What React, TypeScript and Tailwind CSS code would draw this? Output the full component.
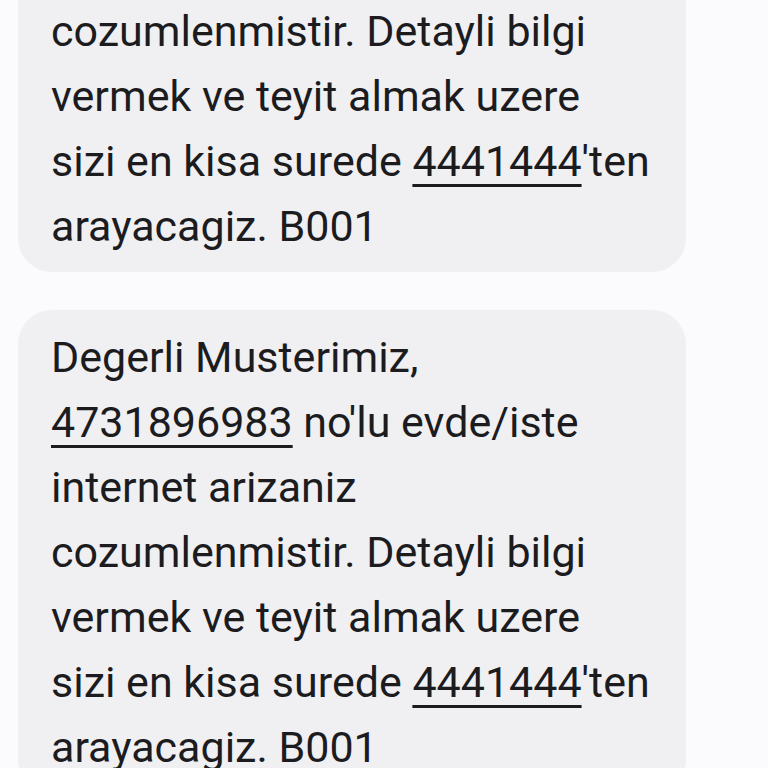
import React from "react";

const Num = ({ children }: { children: React.ReactNode }) => (
  <span className="underline decoration-[3px] underline-offset-[8px]">{children}</span>
);

const Message = ({ className = "" }: { className?: string }) => (
  <div
    className={
      "ml-[18px] w-[668px] rounded-[34px] bg-[#f0f0f3] pl-[33px] pr-4 pt-[15px] pb-[13px] text-[43px] leading-[65px] text-[#1c1c1f] " +
      className
    }
  >
    <div className="whitespace-nowrap">Degerli Musterimiz,</div>
    <div className="whitespace-nowrap">
      <Num>4731896983</Num> no'lu evde/iste
    </div>
    <div className="whitespace-nowrap">internet arizaniz</div>
    <div className="whitespace-nowrap">cozumlenmistir. Detayli bilgi</div>
    <div className="whitespace-nowrap">vermek ve teyit almak uzere</div>
    <div className="whitespace-nowrap">
      sizi en kisa surede <Num>4441444</Num>'ten
    </div>
    <div className="whitespace-nowrap">arayacagiz. B001</div>
  </div>
);

export default function App() {
  return (
    <div
      className="h-[768px] w-[768px] overflow-hidden bg-[#fbfbfd]"
      style={{ fontFamily: "Roboto, 'Noto Sans', sans-serif" }}
    >
      <Message className="mt-[-211px]" />
      <Message className="mt-[38px]" />
    </div>
  );
}
